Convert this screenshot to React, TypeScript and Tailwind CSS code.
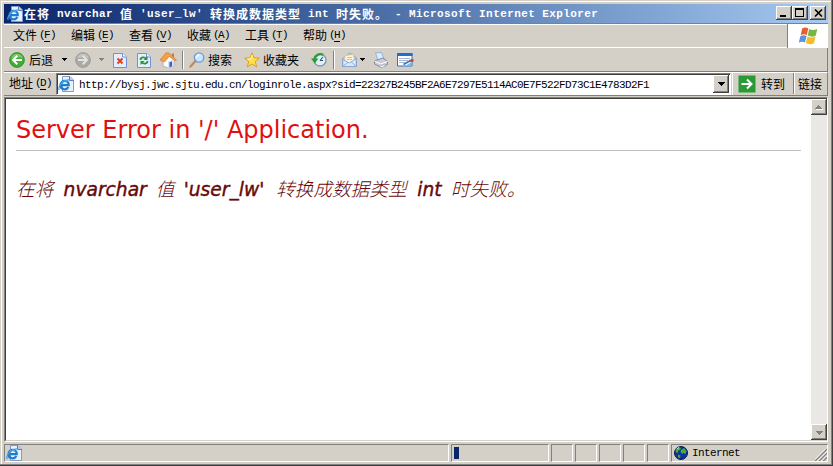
import React from 'react';

/* Latin runs and Chinese runs use different sizes so both sit on the 6px / 12px grid. */
function Mixed({ text, bold = false }: { text: string; bold?: boolean }) {
  const runs = text.match(/[\x20-\x7e]+|[^\x20-\x7e]+/g) || [];
  return (
    <span className="flex items-center whitespace-pre leading-[14px]">
      {runs.map((run, i) =>
        /^[\x20-\x7e]/.test(run) ? (
          <span
            key={i}
            className={
              bold
                ? "font-['Liberation_Mono','DejaVu_Sans_Mono',monospace] text-[11px] font-bold tracking-[0.4px]"
                : "font-['Liberation_Mono','DejaVu_Sans_Mono',monospace] text-[11px] tracking-[-0.6px]"
            }
          >
            {run}
          </span>
        ) : (
          <span
            key={i}
            className={
              bold
                ? "font-['Noto_Sans_CJK_SC',sans-serif] text-[12px] font-bold tracking-[1px]"
                : "font-['Noto_Sans_CJK_SC',sans-serif] text-[12px]"
            }
          >
            {run}
          </span>
        ),
      )}
    </span>
  );
}

function MenuItem({ label, hot }: { label: string; hot: string }) {
  return (
    <div className="flex w-[58px] items-center">
      <Mixed text={label} />
      <Hotkey hot={hot} />
    </div>
  );
}

function Hotkey({ hot }: { hot: string }) {
  return (
    <span className="ml-[2px] flex font-['Liberation_Mono',monospace] text-[11px] leading-[12px] tracking-[-0.6px]">
      <span className="w-[5px]">(</span>
      <span className="w-[6px] border-b border-black">{hot}</span>
      <span>)</span>
    </span>
  );
}

function Caret({ className = 'text-black' }: { className?: string }) {
  return (
    <svg width="5" height="3" viewBox="0 0 5 3" shapeRendering="crispEdges" className={className}>
      <path d="M0 0h5v1H0zM1 1h3v1H1zM2 2h1v1H2z" fill="currentColor" />
    </svg>
  );
}

function PageE() {
  return (
    <svg width="16" height="16" viewBox="0 0 16 16">
      <path d="M4.500.5h7.500l3.500 3.500v11.500h-11z" fill="#e9f1fd" stroke="#7f9bd0" />
      <path d="M11.500.5v4h4" fill="#b9cdf0" stroke="#5a76b8" />
      <path d="M3 9.200h7.800c0-5.900-8.300-5.600-8.300 0 0 4.900 6.200 5.200 7.900 1.900" fill="none" stroke="#1e7cca" strokeWidth="2.200" />
      <path d="M3.500 7c1.200-2.400 4.200-2.700 5.800-.8" fill="none" stroke="#62bdf2" strokeWidth="1" />
      <path d="M1.300 14C-.8 11 5 4 11.800 3.600" fill="none" stroke="#3f9fe2" strokeWidth="1.200" />
    </svg>
  );
}

function RoundArrow({ back }: { back: boolean }) {
  return (
    <svg width="16" height="16" viewBox="0 0 16 16">
      <circle cx="8" cy="8" r="7.400" fill={back ? '#3fae32' : '#a9a9a7'} stroke={back ? '#2a8a22' : '#979794'} strokeWidth=".8" />
      <path d="M2 6.500a6.200 6.200 0 0 1 12 0c-4-2-8-1.500-12 0z" fill="#fff" opacity=".3" />
      <path
        d={back ? 'M13 8H4.500M8.300 3.800L4 8l4.300 4.200' : 'M3 8h8.500M7.700 3.800L12 8l-4.300 4.200'}
        fill="none"
        stroke={back ? '#fff' : '#e4e2dd'}
        strokeWidth="2"
      />
    </svg>
  );
}

function Sheet({ children }: { children: React.ReactNode }) {
  return (
    <svg width="14" height="16" viewBox="0 0 14 16">
      <path d="M.5 1.500h9l4 3.500v10.500H.5z" fill="#e4eefe" stroke="#6f93d6" />
      <path d="M9.500 1.500V5h4" fill="#fff" stroke="#6f93d6" />
      {children}
    </svg>
  );
}

function HomeIcon() {
  return (
    <svg width="17" height="16" viewBox="0 0 17 16">
      <path d="M3 8v6l5 2 6-2.500V8L9 4z" fill="#fff" stroke="#9aa6ba" strokeWidth=".8" />
      <path d="M8 9.500l6-2.200v6.200L8 16z" fill="#d5e2f5" />
      <path d="M9.500 10.300l2.500-.9v4.900l-2.500 1z" fill="#3a62b4" />
      <path d="M12 1.500h2V6h-2z" fill="#b9784a" />
      <path d="M0 8L6 .8 9 1l7.500 7-1.500.8L9.500 4 4.500 10z" fill="#f4a04a" stroke="#d67d2c" strokeWidth=".7" />
    </svg>
  );
}

function SearchIcon() {
  return (
    <svg width="16" height="16" viewBox="0 0 16 16">
      <path d="M1.500 14.500L6.500 9" stroke="#c58a5a" strokeWidth="2.400" strokeLinecap="round" />
      <circle cx="10" cy="5.500" r="4.700" fill="#c9e8ff" stroke="#6d9bd0" strokeWidth="1.300" />
      <path d="M7.500 5.300C7.800 3.500 9 3 10.500 2.800" stroke="#fff" strokeWidth="1.300" fill="none" />
    </svg>
  );
}

function StarIcon() {
  return (
    <svg width="16" height="16" viewBox="0 0 16 16">
      <path d="M8 .8l2 4.900 5.300.4-4.100 3.400 1.400 5.400L8 12l-4.700 2.900 1.400-5.400L.7 6.100 6 5.700z" fill="#ffe04a" stroke="#d69a18" strokeWidth=".9" />
      <path d="M8 3L7 6.700l-3.500.5" stroke="#fffac8" fill="none" />
    </svg>
  );
}

function HistoryIcon() {
  return (
    <svg width="16" height="16" viewBox="0 0 16 16">
      <circle cx="9" cy="8" r="6" fill="#dff0f8" stroke="#8496a8" strokeWidth="1.300" />
      <path d="M9 8.500l3-3.500M9 8.500h3" stroke="#35506c" strokeWidth="1.100" fill="none" />
      <path d="M12 2.800A6 6 0 0 0 3.500 7" fill="none" stroke="#2e9c36" strokeWidth="2.400" />
      <path d="M0 6.500h7.500L3.800 11.500z" fill="#2e9c36" />
    </svg>
  );
}

function MailIcon() {
  return (
    <svg width="15" height="16" viewBox="0 0 15 16">
      <path d="M.5 6.500L8 1l6.500 5v8.500H.5z" fill="#b9d7f7" stroke="#7d9ed2" strokeWidth=".9" />
      <path d="M3 3.500l8.500-1 1 6.500-5 3-5-3.500z" fill="#fff3d2" stroke="#d8bd8a" strokeWidth=".7" />
      <path d="M5 5.500h5M5 7.500h5" stroke="#e8bd90" />
      <path d="M.8 7.500L7.500 11l6.700-4.500v8H.8z" fill="#d7eaff" stroke="#7d9ed2" strokeWidth=".8" />
      <path d="M1 14.300L6 10.500M14 14.300l-4.800-4.500" stroke="#7d9ed2" strokeWidth=".8" />
    </svg>
  );
}

function PrintIcon() {
  return (
    <svg width="15" height="16" viewBox="0 0 15 16">
      <path d="M2.500.8l6-.3 2.500 6.500-6 1.500z" fill="#d9ebff" stroke="#90aedb" strokeWidth=".9" />
      <path d="M1.500 9l8.500-3 4.500 3.500v3L7.500 15 1.500 12z" fill="#c9ccd6" stroke="#7d8492" strokeWidth=".9" />
      <path d="M1.500 9l6 3 7-2.500" fill="none" stroke="#fff" />
      <path d="M6 14.500l5-2 2 1.500-5 1.700z" fill="#f5f8ff" stroke="#8890a4" strokeWidth=".6" />
    </svg>
  );
}

function EditIcon() {
  return (
    <svg width="17" height="14" viewBox="0 0 17 14">
      <path d="M.5.500h14.500v12.500H.5z" fill="#fff" stroke="#2772cf" />
      <path d="M0 0h15.500v3H0z" fill="#1f6fd2" />
      <path d="M2 5.500h11M2 7.500h9M2 9.500h6" stroke="#a9b8cc" />
      <path d="M9 12.500h5.500V9z" fill="#73b8ed" />
      <path d="M6.500 11.500l7-4" stroke="#3978b8" strokeWidth="1.800" />
      <path d="M13 8l3.500-1" stroke="#b84a3a" strokeWidth="2.400" />
    </svg>
  );
}

function FlagIcon() {
  return (
    <svg width="20" height="18" viewBox="0 0 20 18">
      <path d="M4.300 1.300C6.500 0 8.500.4 10.300 1.300L8.800 8C6.700 7 4.700 7.100 2.600 8.100z" fill="#e8602c" />
      <path d="M11.200 1.900C13.300 3 16 3.400 19.300 2L17.700 8.700c-2.700 1.400-5.200 1.200-8-.2z" fill="#76b83d" />
      <path d="M2.400 9C4.800 7.900 6.700 8 8.600 9L7 15.600C5 14.500 3 14.600.8 15.700z" fill="#5b94de" />
      <path d="M9.500 9.500c2.400 1.200 5.200 1.400 8 .1L15.900 16.300c-2.700 1.400-5.400 1.200-8-.2z" fill="#f5bb28" />
    </svg>
  );
}

function Globe() {
  return (
    <svg width="14" height="14" viewBox="0 0 14 14">
      <circle cx="7" cy="7" r="6.500" fill="#10309c" stroke="#0a1a48" />
      <path d="M2 3l3-2 2 1-1 2-2 1v2L1.500 6zM7 4l3-2 2.500 3-1 3-2-1-1 1-2-2zM4 8.500l2.500 1L6 12l-2-.5z" fill="#3fae3a" />
      <path d="M3 3l2-1.500" stroke="#c8f0d0" />
    </svg>
  );
}

const raised =
  'flex items-center justify-center bg-[#d4d0c8] shadow-[inset_-1px_-1px_#404040,inset_1px_1px_#ffffff,inset_-2px_-2px_#808080]';

function ScrollButton({ up }: { up: boolean }) {
  return (
    <div className={`${raised} h-4 w-4`}>
      <svg width="8" height="5" viewBox="0 0 8 5" shapeRendering="crispEdges">
        <g transform={up ? undefined : 'rotate(180 4 2.500)'}>
          <path d="M3 0h1v1h1v1h1v1h1v1H0V3h1V2h1V1h1z" fill="#808080" />
          {up && <path d="M1 4h7v1H1z" fill="#fff" />}
        </g>
      </svg>
    </div>
  );
}

function Divider() {
  return <div className="h-[18px] w-[2px] border-l border-r border-l-[#808080] border-r-white" />;
}

const pane = 'h-[18px] border border-b-white border-l-[#808080] border-r-white border-t-[#808080]';

export default function App() {
  return (
    <div className="flex h-[466px] w-[833px] flex-col overflow-hidden bg-[#d4d0c8] pl-1 pr-[5px] pt-1 font-['Noto_Sans_CJK_SC',sans-serif] text-[12px] text-black shadow-[inset_-1px_-1px_#404040,inset_-2px_-2px_#808080,inset_1px_1px_#d4d0c8,inset_2px_2px_#ffffff]">
      {/* caption */}
      <div className="flex h-[19px] shrink-0 items-center bg-linear-to-r from-[#0a246a] to-[#a6caf0] pl-[3px] pr-0.5 text-white">
        <PageE />
        <div className="ml-px flex-1">
          <Mixed bold text="在将 nvarchar 值 'user_lw' 转换成数据类型 int 时失败。 - Microsoft Internet Explorer" />
        </div>
        <div className="flex pb-px">
          <div className={`${raised} h-[14px] w-4`}>
            <svg width="10" height="10" viewBox="0 0 10 10"><path d="M1 7h6v2H1z" fill="#000" /></svg>
          </div>
          <div className={`${raised} h-[14px] w-4`}>
            <svg width="10" height="10" viewBox="0 0 10 10" shapeRendering="crispEdges"><path d="M0 0h9v9H0zM1 2v6h7V2z" fill="#000" fillRule="evenodd" /></svg>
          </div>
          <div className={`${raised} ml-0.5 h-[14px] w-4`}>
            <svg width="9" height="8" viewBox="0 0 9 8"><path d="M1 .5l7 7M8 .5l-7 7" stroke="#000" strokeWidth="1.600" /></svg>
          </div>
        </div>
      </div>

      {/* menu */}
      <div className="flex h-[25px] shrink-0 border-t border-[#808080]">
        <div className="flex flex-1 border-b border-t border-white pb-0.5 pl-[9px]">
          <MenuItem label="文件" hot="F" />
          <MenuItem label="编辑" hot="E" />
          <MenuItem label="查看" hot="V" />
          <MenuItem label="收藏" hot="A" />
          <MenuItem label="工具" hot="T" />
          <MenuItem label="帮助" hot="H" />
        </div>
        <div className="flex w-[41px] items-center justify-center border-l border-[#808080] bg-white"><FlagIcon /></div>
      </div>

      {/* toolbar */}
      <div className="flex h-6 shrink-0 items-center border-b border-r border-[#808080] pl-[5px]">
        <RoundArrow back />
        <span className="ml-1 w-[33px]">后退</span>
        <Caret />
        <span className="w-2" />
        <RoundArrow back={false} />
        <span className="w-2" />
        <Caret className="text-[#808080]" />
        <span className="w-[9px]" />
        <Sheet><path d="M4.500 6.500l5 5M9.500 6.500l-5 5" stroke="#e5401c" strokeWidth="2" /></Sheet>
        <span className="w-[10px]" />
        <Sheet>
          <path d="M3.500 8c0-3 4-3.500 6-1M10.500 9c0 3-4 3.500-6 1" stroke="#1f9a2c" strokeWidth="1.800" fill="none" />
          <path d="M10.500 4v4h-4zM3.500 13V9h4z" fill="#1f9a2c" />
        </Sheet>
        <span className="w-[9px]" />
        <HomeIcon />
        <span className="w-[5px]" />
        <Divider />
        <span className="w-[5px]" />
        <SearchIcon />
        <span className="ml-[3px] w-9">搜索</span>
        <StarIcon />
        <span className="ml-[3px] w-12">收藏夹</span>
        <HistoryIcon />
        <span className="w-[6px]" />
        <Divider />
        <span className="w-[7px]" />
        <MailIcon />
        <span className="w-[3px]" />
        <Caret />
        <span className="w-2" />
        <PrintIcon />
        <span className="w-[9px]" />
        <EditIcon />
      </div>

      {/* address */}
      <div className="flex h-6 shrink-0 border-b border-r border-t border-b-[#808080] border-r-[#808080] border-t-white">
        <div className="flex w-[52px] items-center pb-0.5 pl-[5px]">
          <Mixed text="地址" />
          <Hotkey hot="D" />
        </div>
        <div className="flex h-[22px] w-[675px] items-center border border-b-white border-l-[#808080] border-r-white border-t-[#808080] bg-white pr-px shadow-[inset_1px_1px_#404040]">
          <div className="ml-px"><PageE /></div>
          <div className="ml-[5px] flex-1 pt-px">
            <Mixed text="http://bysj.jwc.sjtu.edu.cn/loginrole.aspx?sid=22327B245BF2A6E7297E5114AC0E7F522FD73C1E4783D2F1" />
          </div>
          <div className={`${raised} h-[18px] w-4`}>
            <svg width="7" height="4" viewBox="0 0 7 4" shapeRendering="crispEdges"><path d="M0 0h7v1H0zM1 1h5v1H1zM2 2h3v1H2zM3 3h1v1H3z" /></svg>
          </div>
        </div>
        <div className="ml-px flex flex-1 items-center border-l border-white pb-px pl-[5px]">
          <svg width="18" height="18" viewBox="0 0 18 18">
            <rect x=".5" y=".5" width="17" height="17" rx="1" fill="#2b9a35" stroke="#77b97a" />
            <path d="M3.500 9h10M9 4.500L13.500 9 9 13.500" fill="none" stroke="#fff" strokeWidth="2" />
          </svg>
          <span className="ml-[5px] w-8">转到</span>
          <div className="h-full w-px bg-[#808080]" />
          <div className="h-full w-px bg-white" />
          <span className="ml-[3px]">链接</span>
        </div>
      </div>

      {/* page */}
      <div className="mt-px flex h-[345px] shrink-0 border border-b-white border-l-[#808080] border-r-white border-t-[#808080]">
        <div className="flex flex-1 border border-b-[#d4d0c8] border-l-[#404040] border-r-0 border-t-[#404040] bg-white">
          <div className="flex-1 pl-[10px] pr-[10px] pt-[17px]">
            <h1 className="h-[35px] whitespace-nowrap border-b border-[#c0c0c0] font-['DejaVu_Sans',sans-serif] text-[24px] leading-[29px] text-[#e01010]">
              Server Error in '/' Application.
            </h1>
            <h2 className="mt-[25px] flex items-center gap-[9.300px] whitespace-nowrap font-['DejaVu_Sans','Noto_Sans_CJK_SC',sans-serif] text-[18.670px] italic leading-[28px] text-[#690808]">
              <span className="w-[38.300px] font-light">在将</span>
              <span className="w-[82.800px] [-webkit-text-stroke:0.4px_#690808]">nvarchar</span>
              <span className="font-light">值</span>
              <span className="w-[83px] [-webkit-text-stroke:0.4px_#690808]">'user_lw'</span>
              <span className="w-[132px] font-light">转换成数据类型</span>
              <span className="w-[24.300px] [-webkit-text-stroke:0.4px_#690808]">int</span>
              <span className="font-light">时失败。</span>
            </h2>
          </div>
          <div className="flex w-4 flex-col justify-between bg-[#eae8e4]">
            <ScrollButton up />
            <ScrollButton up={false} />
          </div>
        </div>
      </div>

      {/* status */}
      <div className="mt-0.5 flex shrink-0 gap-0.5">
        <div className={`${pane} flex w-[445px] items-center pl-px`}><PageE /></div>
        <div className={`${pane} w-[98px] pl-0.5 pt-0.5`}><div className="h-3 w-[5px] bg-[#0a246a]" /></div>
        <div className={`${pane} w-[22px]`} />
        <div className={`${pane} w-[22px]`} />
        <div className={`${pane} w-[22px]`} />
        <div className={`${pane} w-[22px]`} />
        <div className={`${pane} w-[22px]`} />
        <div className={`${pane} flex flex-1 items-center pl-0.5`}>
          <Globe />
          <div className="ml-1 flex-1"><Mixed text="Internet" /></div>
          <svg width="12" height="12" viewBox="0 0 12 12" className="self-end">
            <path d="M0 12L12 0M4 12l8-8M8 12l4-4" stroke="#808080" strokeWidth="1.500" />
            <path d="M-1.500 12L12-1.500M2.500 12L12 2.500M6.500 12L12 6.500" stroke="#fff" />
          </svg>
        </div>
      </div>
    </div>
  );
}
